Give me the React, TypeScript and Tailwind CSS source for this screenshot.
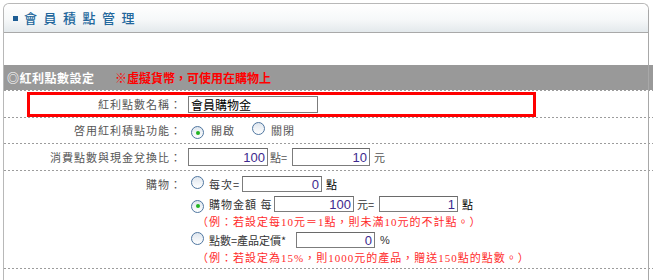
import React from "react";

function Dash() {
  return (
    <div className="h-px bg-[repeating-linear-gradient(90deg,#9c9c9c_0_2px,transparent_2px_4px)]" />
  );
}

function Radio({ checked = false }: { checked?: boolean }) {
  return (
    <span className="inline-flex h-[13px] w-[13px] shrink-0 items-center justify-center rounded-full border border-[#4f76a0] bg-[linear-gradient(#dfe6ee,#ffffff)]">
      {checked && <span className="h-[4px] w-[4px] rounded-full bg-[#22b422]" />}
    </span>
  );
}

function Box({ value, className = "" }: { value: string; className?: string }) {
  return (
    <input
      readOnly
      value={value}
      className={`border border-[#7c7c7c] border-t-[#6a6a6a] bg-white px-[2px] text-right font-['Liberation_Sans',sans-serif] text-[13px] leading-none text-[#3d2a8e] outline-none ${className}`}
    />
  );
}

function Label({ children }: { children: React.ReactNode }) {
  return (
    <div className="w-[180px] shrink-0 pr-[2px] text-right text-[11px] tracking-[1px] text-[#555]">
      {children}
    </div>
  );
}

export default function App() {
  return (
    <div className="relative h-[280px] w-[653px] overflow-hidden bg-white font-['Noto_Sans_CJK_TC','Noto_Sans_CJK_SC',sans-serif]">
      <div className="relative ml-[3px] mt-[3px] h-[300px] w-[646px] rounded-t-[6px] border-x border-t border-[#b8b8b8]">
        {/* title bar */}
        <div className="flex h-[29px] items-center gap-[6px] rounded-t-[6px] border-b border-[#a9a9a9] bg-[linear-gradient(#ffffff,#f6f8f9_55%,#e3e9ec)] pl-[9px]">
          <span className="h-[5px] w-[5px] bg-[#1d5d94]" />
          <span className="text-[13px] font-medium tracking-[6.5px] text-[#22679c]">會員積點管理</span>
        </div>

        <div className="h-[32px]" />

        <div className="w-[660px]">
          {/* section bar */}
          <div className="flex h-[25px] items-center bg-[#999999] pl-[3px] text-[12px] font-bold">
            <span className="w-[108px] tracking-[0.5px] text-white">◎紅利點數設定</span>
            <span className="text-[#ff0000]">※虛擬貨幣，可使用在購物上</span>
          </div>
          <Dash />

          <div className="flex h-[26px] items-center">
            <Label>紅利點數名稱：</Label>
            <div className="flex items-center pl-[4px]">
              <input
                readOnly
                value="會員購物金"
                className="h-[17px] w-[130px] border border-[#7c7c7c] bg-white px-[2px] text-[12px] leading-none text-black outline-none"
              />
            </div>
          </div>
          <Dash />

          <div className="flex h-[25px] items-center">
            <Label>啓用紅利積點功能：</Label>
            <div className="flex items-center pl-[4px] text-[11px] tracking-[1px] text-[#555]">
              <span className="ml-[3px]"><Radio checked /></span>
              <span className="ml-[7px]">開啟</span>
              <span className="ml-[17px]"><Radio /></span>
              <span className="ml-[6px]">關閉</span>
            </div>
          </div>
          <Dash />

          <div className="flex h-[26px] items-center">
            <Label>消費點數與現金兌換比：</Label>
            <div className="flex items-center pl-[4px] text-[11px] text-[#555]">
              <Box value="100" className="h-[18px] w-[80px]" />
              <span className="ml-[2px] w-[22px]">點=</span>
              <Box value="10" className="h-[18px] w-[78px]" />
              <span className="ml-[4px]">元</span>
            </div>
          </div>
          <Dash />

          <div className="flex h-[97px] pt-[3px]">
            <Label>
              <div className="flex h-[20px] items-center justify-end">購物：</div>
            </Label>
            <div className="flex flex-col pl-[4px] text-[11px] text-[#333]">
              <div className="flex h-[20px] items-center">
                <span className="ml-[3px]"><Radio /></span>
                <span className="ml-[5px] w-[33px] tracking-[1px]">每次=</span>
                <Box value="0" className="h-[16px] w-[80px]" />
                <span className="ml-[4px] text-black">點</span>
              </div>
              <div className="flex h-[20px] items-center">
                <span className="ml-[3px]"><Radio checked /></span>
                <span className="ml-[5px] w-[65px] tracking-[1px]">購物金額 每</span>
                <Box value="100" className="h-[16px] w-[80px]" />
                <span className="ml-[3px] w-[22px]">元=</span>
                <Box value="1" className="h-[16px] w-[79px]" />
                <span className="ml-[4px] text-black">點</span>
              </div>
              <div className="flex h-[16px] items-center pl-[9px] font-['Liberation_Serif','Noto_Sans_CJK_TC',serif] text-[11px] tracking-[1px] text-[#ff2b2b]">
                （例：若設定每10元＝1點，則未滿10元的不計點。）
              </div>
              <div className="flex h-[20px] items-center">
                <span className="ml-[3px]"><Radio /></span>
                <span className="ml-[5px] w-[87px]">點數=產品定價*</span>
                <Box value="0" className="h-[16px] w-[79px]" />
                <span className="ml-[5px] font-['Liberation_Sans',sans-serif]">%</span>
              </div>
              <div className="flex h-[16px] items-center pl-[9px] font-['Liberation_Serif','Noto_Sans_CJK_TC',serif] text-[11px] tracking-[1px] text-[#ff2b2b]">
                （例：若設定為15%，則1000元的產品，贈送150點的點數。）
              </div>
            </div>
          </div>
          <Dash />
        </div>

        {/* right frame line drawn over the wide table */}
        <div className="pointer-events-none absolute -right-px top-[6px] bottom-0 w-px bg-[#a8a8a8]" />
      </div>

      {/* red highlight annotation */}
      <div className="pointer-events-none absolute left-[27px] top-[92px] h-[25px] w-[509px] border-[3px] border-[#ff0000]" />
    </div>
  );
}
